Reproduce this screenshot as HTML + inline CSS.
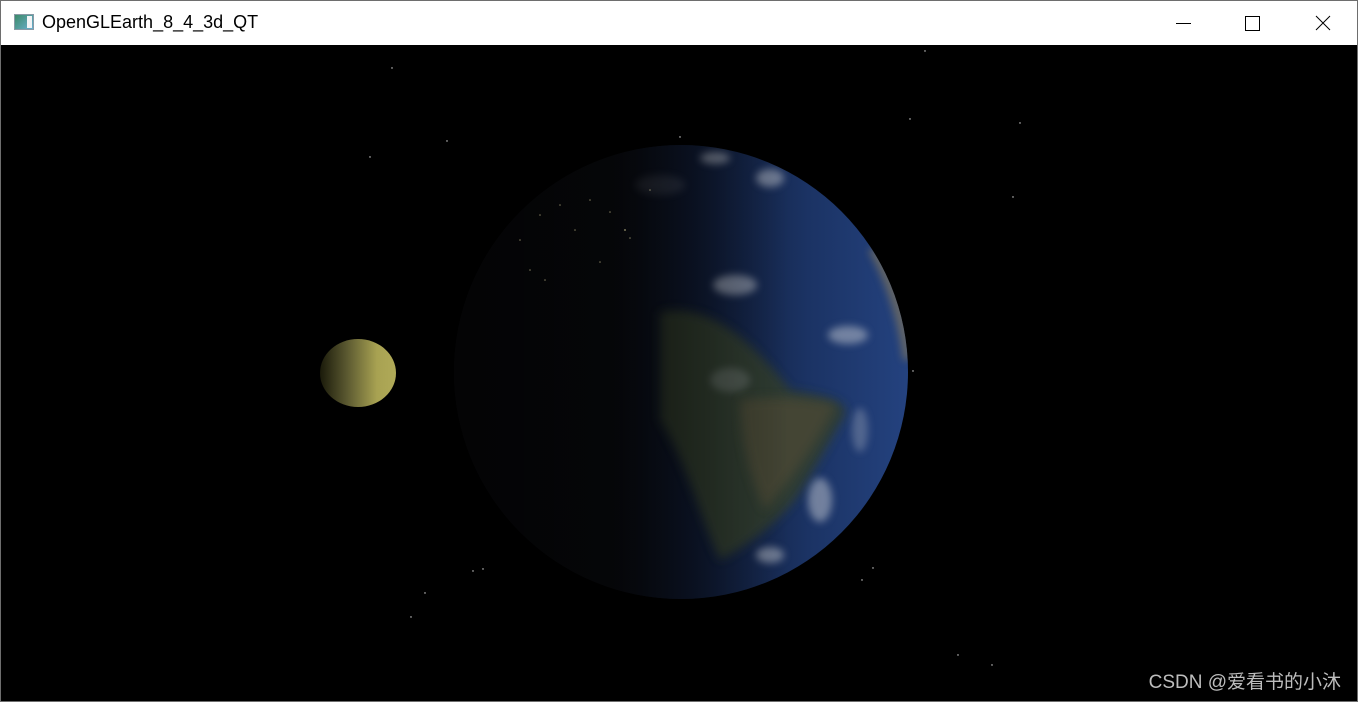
<!DOCTYPE html>
<html><head><meta charset="utf-8"><style>
html,body{margin:0;padding:0;background:#000;}
body{width:1358px;height:702px;position:relative;overflow:hidden;font-family:"Liberation Sans","Noto Sans CJK SC",sans-serif;}
.win{position:absolute;left:0;top:0;width:1356px;height:700px;border:1px solid #6e6e6e;background:#000;}
.title{position:absolute;left:0;top:0;width:1356px;height:44px;background:#fff;}
.title .t{position:absolute;left:41px;top:11px;font-size:18px;color:#000;}
.ico{position:absolute;left:13px;top:13px;width:20px;height:16px;border:1px solid #8a9aa6;background:linear-gradient(135deg,#3c8a6a,#6cb0d0);box-sizing:border-box;}
.ico:after{content:"";position:absolute;right:1px;top:1px;width:5px;height:12px;background:#f2f4f6;}
.wm{position:absolute;right:17px;bottom:8px;font-size:19px;color:#bdbdbd;}
</style></head><body>
<div class="win">
<div class="title"><div class="ico"></div><div class="t">OpenGLEarth_8_4_3d_QT</div>
<svg style="position:absolute;left:1150px;top:0" width="206" height="44">
<line x1="25" y1="22.5" x2="40" y2="22.5" stroke="#000" stroke-width="1"/>
<rect x="94.5" y="15.5" width="14" height="14" fill="none" stroke="#000" stroke-width="1"/>
<path d="M165 15 L179 29 M179 15 L165 29" stroke="#000" stroke-width="1"/>
</svg></div>
</div>
<svg style="position:absolute;left:0;top:0" width="1358" height="702">
<defs>
<linearGradient id="sea" x1="0" x2="1" y1="0" y2="0">
<stop offset="0" stop-color="#0a0a0d"/><stop offset="0.35" stop-color="#0b0c11"/>
<stop offset="0.55" stop-color="#0f1a33"/><stop offset="0.78" stop-color="#1b3364"/><stop offset="1" stop-color="#24427f"/>
</linearGradient>
<linearGradient id="moon" x1="0" x2="1">
<stop offset="0" stop-color="#1a1a0a"/><stop offset="0.35" stop-color="#5a5830"/><stop offset="0.75" stop-color="#a8a252"/><stop offset="1" stop-color="#b0aa58"/>
</linearGradient>
<linearGradient id="shade" x1="0" x2="1"><stop offset="0" stop-color="#000" stop-opacity="0.65"/><stop offset="0.4" stop-color="#000" stop-opacity="0.5"/><stop offset="0.72" stop-color="#000" stop-opacity="0"/></linearGradient>
<filter id="bl"><feGaussianBlur stdDeviation="5"/></filter>
<filter id="bl2"><feGaussianBlur stdDeviation="4"/></filter>
<clipPath id="ec"><circle cx="681" cy="372" r="227"/></clipPath>
</defs>
<circle cx="681" cy="372" r="227" fill="url(#sea)"/>
<g clip-path="url(#ec)">
<path d="M660 312 C700 305 740 325 790 390 C820 395 850 400 845 415 C830 440 815 470 795 500 C770 530 740 550 720 560 C700 520 690 470 660 420 Z" fill="#34402a" filter="url(#bl)" opacity="0.8"/>
<path d="M740 400 C780 395 815 400 835 405 C820 440 790 480 765 510 C750 480 740 440 740 400 Z" fill="#4e4a36" filter="url(#bl)" opacity="0.7"/>
<path d="M868 250 C885 280 898 320 903 360 L912 360 L912 240 Z" fill="#8a7c58" filter="url(#bl2)" opacity="0.6"/>
<g fill="#c8ccd4" filter="url(#bl2)" opacity="0.5">
<ellipse cx="735" cy="285" rx="22" ry="10"/><ellipse cx="848" cy="335" rx="20" ry="9"/>
<ellipse cx="820" cy="500" rx="12" ry="22"/><ellipse cx="770" cy="555" rx="14" ry="8"/>
<ellipse cx="770" cy="178" rx="14" ry="9"/><ellipse cx="715" cy="158" rx="15" ry="6"/>
<ellipse cx="860" cy="430" rx="8" ry="22" opacity="0.6"/><ellipse cx="730" cy="380" rx="20" ry="12" opacity="0.4"/>
<ellipse cx="660" cy="185" rx="25" ry="10" opacity="0.3"/>
</g>
<rect x="450" y="140" width="470" height="470" fill="url(#shade)"/>
<g fill="#c8c090" opacity="0.6">
<circle cx="540" cy="215" r="0.8"/><circle cx="560" cy="205" r="0.8"/><circle cx="590" cy="200" r="0.8"/><circle cx="610" cy="212" r="0.8"/><circle cx="625" cy="230" r="1"/><circle cx="630" cy="238" r="0.8"/><circle cx="575" cy="230" r="0.8"/><circle cx="530" cy="270" r="0.8"/><circle cx="545" cy="280" r="0.8"/><circle cx="600" cy="262" r="0.8"/><circle cx="650" cy="190" r="0.8"/><circle cx="520" cy="240" r="0.8"/>
</g>
</g>
<ellipse cx="358" cy="373" rx="38" ry="34" fill="url(#moon)"/>
<g fill="#ddd">
<circle cx="392" cy="68" r="0.7"/><circle cx="370" cy="157" r="0.7"/><circle cx="447" cy="141" r="0.7"/><circle cx="910" cy="119" r="0.7"/><circle cx="1020" cy="123" r="0.7"/><circle cx="925" cy="51" r="0.7"/><circle cx="1013" cy="197" r="0.7"/><circle cx="680" cy="137" r="0.7"/><circle cx="473" cy="571" r="0.7"/><circle cx="483" cy="569" r="0.7"/><circle cx="425" cy="593" r="0.7"/><circle cx="411" cy="617" r="0.7"/><circle cx="873" cy="568" r="0.7"/><circle cx="862" cy="580" r="0.7"/><circle cx="958" cy="655" r="0.7"/><circle cx="992" cy="665" r="0.7"/><circle cx="913" cy="371" r="0.7"/>
</g>
</svg>
<div class="wm">CSDN @爱看书的小沐</div>
</body></html>
